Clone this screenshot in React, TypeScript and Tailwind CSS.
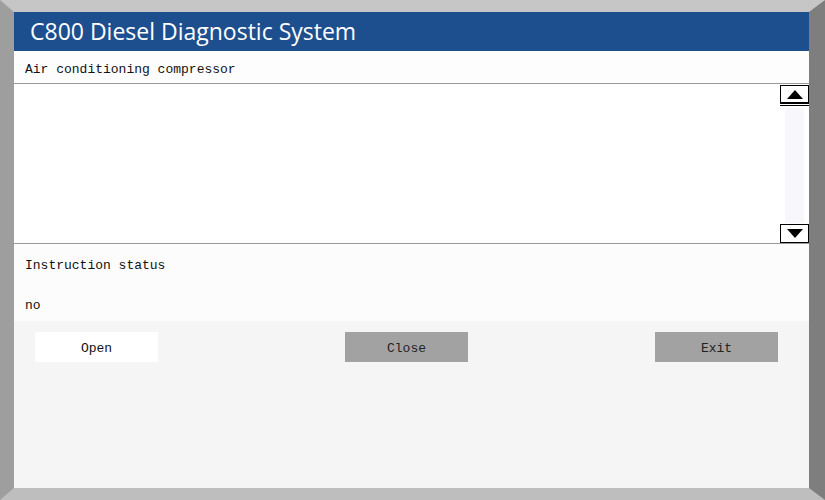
export default function App() {
  const mono = { fontFamily: '"Liberation Mono", "DejaVu Sans Mono", monospace' };

  return (
    <div
      className="w-[825px] h-[500px] flex flex-col border-l-[14px] border-l-[#9e9e9e]
        border-t-[12px] border-t-[#c6c6c6] border-r-[16px] border-r-[#7e7e7e]
        border-b-[12px] border-b-[#bebebe] bg-white overflow-hidden"
    >
      {/* Title bar */}
      <div
        className="h-[39px] shrink-0 flex items-center pl-[16px] pb-[1px] bg-[#1d4f8f] text-white text-[23px]"
        style={{ fontFamily: '"Open Sans", "Noto Sans", sans-serif' }}
      >
        C800 Diesel Diagnostic System
      </div>

      {/* Item header */}
      <div
        className="h-[33px] shrink-0 flex items-center pl-[11px] pt-[5px] text-[13px] text-[#111] bg-[#fdfdfd] border-b border-[#9a9a9a]"
        style={mono}
      >
        Air conditioning compressor
      </div>

      {/* List with scroll buttons */}
      <div className="h-[160px] shrink-0 flex bg-white border-b border-[#9a9a9a]">
        <div className="flex-1" />
        <div className="w-[29px] flex flex-col pt-[1px]">
          <div className="h-[22px] flex flex-col">
            <div className="h-[19px] border border-black border-b-2 flex items-center justify-center bg-white">
              <svg width="16" height="9" viewBox="0 0 16 9">
                <path d="M8 0 L16 9 L0 9 Z" fill="#000" />
              </svg>
            </div>
            <div className="h-[1px]" />
            <div className="h-[1px] bg-black" />
          </div>
          <div className="flex-1 mx-[5px] my-[1px] bg-[#f8f7fb]" />
          <div className="h-[19px] border border-black flex items-center justify-center bg-white">
            <svg width="16" height="9" viewBox="0 0 16 9">
              <path d="M0 0 L16 0 L8 9 Z" fill="#000" />
            </svg>
          </div>
        </div>
      </div>

      {/* Status */}
      <div className="h-[77px] shrink-0 flex flex-col pl-[11px] pt-[12px] gap-[20px] bg-[#fcfcfc] text-[13px] text-[#111]" style={mono}>
        <div className="h-[20px] leading-[20px]">Instruction status</div>
        <div className="h-[20px] leading-[20px]">no</div>
      </div>

      {/* Buttons */}
      <div className="flex-1 bg-[#f5f5f5] pt-[11px] pl-[21px] flex items-start gap-[187px]">
        <button
          className="w-[123px] h-[30px] pt-[3px] bg-white text-[13px] text-[#111]"
          style={mono}
        >
          Open
        </button>
        <button
          className="w-[123px] h-[30px] pt-[3px] bg-[#a2a2a2] text-[13px] text-[#222]"
          style={mono}
        >
          Close
        </button>
        <button
          className="w-[123px] h-[30px] pt-[3px] bg-[#a2a2a2] text-[13px] text-[#222]"
          style={mono}
        >
          Exit
        </button>
      </div>
    </div>
  );
}
